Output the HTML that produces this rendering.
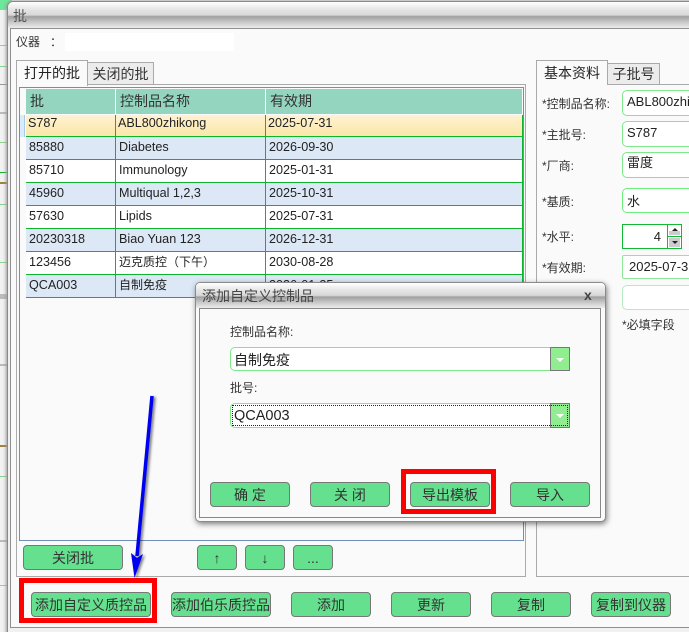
<!DOCTYPE html>
<html><head><meta charset="utf-8"><style>
html,body{margin:0;padding:0;width:689px;height:632px;overflow:hidden}
body{position:relative;background:#e8e8e8;font-family:"Liberation Sans","Noto Sans CJK SC",sans-serif;font-size:12px;color:#222}
div{position:absolute;box-sizing:border-box;white-space:nowrap}
#w{left:0;top:0;width:689px;height:632px;overflow:hidden}
.btn{background:#64e08e;border:1px solid #777;border-radius:4px;height:25px;text-align:center;line-height:24px;font-size:14px;color:#333}
.tb{background:linear-gradient(#fff 0,#e4e4e4 30%,#d8d8d8 50%,#a0a0a0 56%,#c4c4c4 75%,#ececec 100%)}
.c{height:23px;line-height:20px;font-size:12.6px;color:#222;padding-left:3px;border-bottom:1px solid #0eb52e;border-right:1px solid #0eb52e}
.c span{font-size:12px}
.h{background:#94d5bf;height:25px;line-height:25px;font-size:14px;color:#333;padding-left:4px}
.lb{font-size:12px;color:#333;left:542px}
.in{left:622px;width:80px;background:#fff;border:1px solid #7fe88a;border-radius:5px;font-size:13px;padding-left:4px;color:#222}
.bl{left:0;width:7px}
</style></head><body><div id="w">

<!-- background window strip -->
<div style="left:0;top:0;width:8px;height:632px;background:#f2f2f2"></div>
<div style="left:0;top:0;width:12px;height:10px;background:#6ce89a;border-radius:0 0 8px 0"></div>
<div class="bl" style="top:45px;height:1px;background:#8cd68c"></div>
<div class="bl" style="top:66px;height:1px;background:#8cd68c"></div>
<div class="bl" style="top:84px;height:1px;background:#999"></div>
<div class="bl" style="top:112px;height:2px;background:#bbb"></div>
<div class="bl" style="top:142px;height:1px;background:#8cd68c"></div>
<div class="bl" style="top:172px;height:1px;background:#0eb52e"></div>
<div class="bl" style="top:182px;height:2px;background:#a08040"></div>
<div class="bl" style="top:204px;height:1px;background:#8cd68c"></div>
<div class="bl" style="top:262px;height:1px;background:#8cd68c"></div>
<div class="bl" style="top:294px;height:5px;background:#bbb"></div>
<div class="bl" style="top:364px;height:2px;background:#bbb"></div>
<div class="bl" style="top:445px;height:2px;background:#a08040"></div>
<div class="bl" style="top:476px;height:1px;background:#8cd68c"></div>
<div class="bl" style="top:540px;height:2px;background:#bbb"></div>
<div class="bl" style="top:585px;height:1px;background:#8cd68c"></div>

<!-- main window -->
<div style="left:7px;top:1px;width:690px;height:640px;background:#f1f1f1;border:1px solid #8a8a8a;border-radius:6px 0 0 0;box-shadow:-1px 0 3px #999"></div>
<div class="tb" style="left:8px;top:2px;width:681px;height:26px;border-radius:5px 0 0 0"></div>
<div style="left:13px;top:6px;font-size:14px;color:#555;line-height:20px">批</div>
<div style="left:10px;top:28px;width:680px;height:600px;background:#fafafa;border:1px solid #8f8f8f"></div>
<div style="left:16px;top:33px;font-size:12px;color:#333;line-height:18px">仪器 &nbsp;&nbsp;：</div>
<div style="left:65px;top:33px;width:169px;height:18px;background:#fff"></div>

<!-- left tabs -->
<div style="left:16px;top:84px;width:510px;height:493px;border:1px solid #aaa"></div>
<div style="left:16px;top:60px;width:72px;height:26px;background:#fafafa;border:1px solid #aaa;border-bottom:0;font-size:14px;line-height:25px;text-align:center;color:#222">打开的批</div>
<div style="left:88px;top:62px;width:66px;height:23px;background:#ececec;border:1px solid #aaa;border-left:0;font-size:14px;line-height:23px;text-align:center;color:#333">关闭的批</div>

<!-- grid -->
<div style="left:19px;top:87px;width:505px;height:454px;background:#fafafa;border:1px solid #6f8fb5"></div>
<div class="h" style="left:26px;top:89px;width:89px">批</div>
<div class="h" style="left:116px;top:89px;width:149px">控制品名称</div>
<div class="h" style="left:266px;top:89px;width:256px">有效期</div>

<div style="left:20px;top:115px;width:5px;height:22px;background:#d9ecf9;border-right:1px solid #a5cbe6"></div>
<div class="c" style="left:26px;top:115px;width:90px;height:22px;background:linear-gradient(#fff2d2,#fbe7a8);padding-left:2px;line-height:16px">S787</div>
<div class="c" style="left:116px;top:115px;width:150px;height:22px;background:linear-gradient(#fff2d2,#fbe7a8);padding-left:2px;line-height:16px">ABL800zhikong</div>
<div class="c" style="left:266px;top:115px;width:257px;height:22px;background:linear-gradient(#fff2d2,#fbe7a8);padding-left:2px;line-height:16px">2025-07-31</div>

<div class="c" style="left:26px;top:137px;width:90px;background:#dce8f6">85880</div>
<div class="c" style="left:116px;top:137px;width:150px;background:#dce8f6">Diabetes</div>
<div class="c" style="left:266px;top:137px;width:257px;background:#dce8f6">2026-09-30</div>

<div class="c" style="left:26px;top:160px;width:90px;background:#fff">85710</div>
<div class="c" style="left:116px;top:160px;width:150px;background:#fff">Immunology</div>
<div class="c" style="left:266px;top:160px;width:257px;background:#fff">2025-01-31</div>

<div class="c" style="left:26px;top:183px;width:90px;background:#dce8f6">45960</div>
<div class="c" style="left:116px;top:183px;width:150px;background:#dce8f6">Multiqual 1,2,3</div>
<div class="c" style="left:266px;top:183px;width:257px;background:#dce8f6">2025-10-31</div>

<div class="c" style="left:26px;top:206px;width:90px;background:#fff">57630</div>
<div class="c" style="left:116px;top:206px;width:150px;background:#fff">Lipids</div>
<div class="c" style="left:266px;top:206px;width:257px;background:#fff">2025-07-31</div>

<div class="c" style="left:26px;top:229px;width:90px;background:#dce8f6">20230318</div>
<div class="c" style="left:116px;top:229px;width:150px;background:#dce8f6">Biao Yuan 123</div>
<div class="c" style="left:266px;top:229px;width:257px;background:#dce8f6">2026-12-31</div>

<div class="c" style="left:26px;top:252px;width:90px;background:#fff">123456</div>
<div class="c" style="left:116px;top:252px;width:150px;background:#fff"><span>迈克质控（下午）</span></div>
<div class="c" style="left:266px;top:252px;width:257px;background:#fff">2030-08-28</div>

<div class="c" style="left:26px;top:275px;width:90px;background:#dce8f6">QCA003</div>
<div class="c" style="left:116px;top:275px;width:150px;background:#dce8f6"><span>自制免疫</span></div>
<div class="c" style="left:266px;top:275px;width:257px;background:#dce8f6">2026-01-25</div>

<!-- under-grid buttons -->
<div class="btn" style="left:23px;top:545px;width:100px">关闭批</div>
<div class="btn" style="left:197px;top:545px;width:40px">↑</div>
<div class="btn" style="left:245px;top:545px;width:40px">↓</div>
<div class="btn" style="left:293px;top:545px;width:40px">...</div>

<!-- right panel -->
<div style="left:536px;top:84px;width:160px;height:493px;border:1px solid #aaa"></div>
<div style="left:536px;top:60px;width:72px;height:25px;background:#fafafa;border:1px solid #aaa;border-bottom:0;font-size:14px;line-height:24px;text-align:center;color:#222">基本资料</div>
<div style="left:608px;top:63px;width:52px;height:22px;background:#ececec;border:1px solid #aaa;border-left:0;font-size:14px;line-height:21px;text-align:center;color:#333">子批号</div>

<div class="lb" style="top:95px">*控制品名称:</div>
<div class="in" style="top:90px;height:26px;line-height:22px">ABL800zhikong</div>
<div class="lb" style="top:126px">*主批号:</div>
<div class="in" style="top:121px;height:26px;line-height:22px">S787</div>
<div class="lb" style="top:157px">*厂商:</div>
<div class="in" style="top:152px;height:26px;line-height:20px">雷度</div>
<div class="lb" style="top:193px">*基质:</div>
<div class="in" style="top:188px;height:25px;line-height:26px;border-color:#6cf07c;border-width:1.5px">水</div>
<div class="lb" style="top:228px">*水平:</div>
<div style="left:622px;top:224px;width:46px;height:25px;background:#fff;border:1px solid #12b935;text-align:right;padding-right:6px;font-size:13px;line-height:23px">4</div>
<div style="left:667px;top:224px;width:15px;height:13px;background:#fff;border:1px solid #12b935"></div>
<div style="left:667px;top:236px;width:15px;height:13px;background:#fff;border:1px solid #12b935"></div>
<div style="left:669px;top:231px;width:11px;height:4px;background:#ccc"></div>
<div style="left:669px;top:238px;width:11px;height:9px;background:#ccc"></div>
<div style="left:672px;top:228px;width:0;height:0;border:3px solid transparent;border-top:0;border-bottom:3px solid #222"></div>
<div style="left:672px;top:241px;width:0;height:0;border:3px solid transparent;border-bottom:0;border-top:3px solid #222"></div>
<div class="lb" style="top:259px">*有效期:</div>
<div class="in" style="top:255px;height:24px;line-height:22px;border-radius:2px;border-color:#8ee89a;padding-left:6px">2025-07-31</div>
<div class="in" style="top:285px;height:25px;border-color:#b8e8c0"></div>
<div style="left:622px;top:316px;font-size:12px;color:#333">*必填字段</div>

<!-- bottom buttons -->
<div class="btn" style="left:31px;top:592px;width:120px;padding:0">添加自定义质控品</div>
<div class="btn" style="left:171px;top:592px;width:100px;padding:0">添加伯乐质控品</div>
<div class="btn" style="left:291px;top:592px;width:80px">添加</div>
<div class="btn" style="left:391px;top:592px;width:80px">更新</div>
<div class="btn" style="left:491px;top:592px;width:80px">复制</div>
<div class="btn" style="left:591px;top:592px;width:80px">复制到仪器</div>

<!-- red box bottom -->
<div style="left:19px;top:578px;width:138px;height:45px;border:5px solid #f00"></div>

<!-- dialog -->
<div style="left:195px;top:282px;width:411px;height:240px;background:#fafafa;border:1px solid #8a8a8a;border-radius:5px;box-shadow:1px 2px 6px rgba(0,0,0,.5)"></div>
<div class="tb" style="left:196px;top:283px;width:409px;height:25px;border-radius:4px 4px 0 0"></div>
<div style="left:202px;top:286px;font-size:14px;color:#444;line-height:20px">添加自定义控制品</div>
<div style="left:584px;top:287px;font-size:14px;font-weight:bold;color:#444;line-height:16px">x</div>
<div style="left:199px;top:308px;width:402px;height:210px;background:#fafafa;border:1px solid #888"></div>
<div style="left:230px;top:323px;font-size:12px;color:#333">控制品名称:</div>
<div style="left:230px;top:347px;width:321px;height:24px;background:#fff;border:1px solid #7fe88a;border-radius:5px 0 0 5px;font-size:14px;line-height:24px;padding-left:3px">自制免疫</div>
<div style="left:550px;top:347px;width:20px;height:24px;background:#90ee90;border:1px solid #777"></div>
<div style="left:556px;top:358px;width:0;height:0;border:4px solid transparent;border-bottom:0;border-top:4px solid #fff"></div>
<div style="left:230px;top:379px;font-size:12px;color:#333">批号:</div>
<div style="left:230px;top:403px;width:321px;height:25px;background:#fff;border:1px solid #7fe88a;border-radius:5px 0 0 5px;font-size:14.5px;line-height:25px;padding-left:3px">QCA003</div>
<div style="left:550px;top:403px;width:20px;height:25px;background:#90ee90;border:1px solid #777"></div>
<div style="left:232px;top:405px;width:336px;height:21px;border:1px dotted #222"></div>
<div style="left:556px;top:414px;width:0;height:0;border:4px solid transparent;border-bottom:0;border-top:4px solid #fff"></div>
<div class="btn" style="left:210px;top:482px;width:80px">确 定</div>
<div class="btn" style="left:310px;top:482px;width:80px">关 闭</div>
<div class="btn" style="left:410px;top:482px;width:80px">导出模板</div>
<div class="btn" style="left:510px;top:482px;width:80px">导入</div>
<div style="left:401px;top:469px;width:95px;height:45px;border:5px solid #f00"></div>

<!-- arrow -->
<svg style="position:absolute;left:0;top:0" width="689" height="632">
<defs><filter id="s" x="-50%" y="-5%" width="200%" height="110%"><feDropShadow dx="2" dy="1" stdDeviation="1.200" flood-color="#000" flood-opacity=".5"/></filter></defs>
<g filter="url(#s)">
<path d="M152 396 L137 556" stroke="#0000f0" stroke-width="3.500" fill="none"/>
<path d="M131 553 L137 558 L143 554 L134.500 578 Z" fill="#0000f0"/>
</g></svg>
</div></body></html>
